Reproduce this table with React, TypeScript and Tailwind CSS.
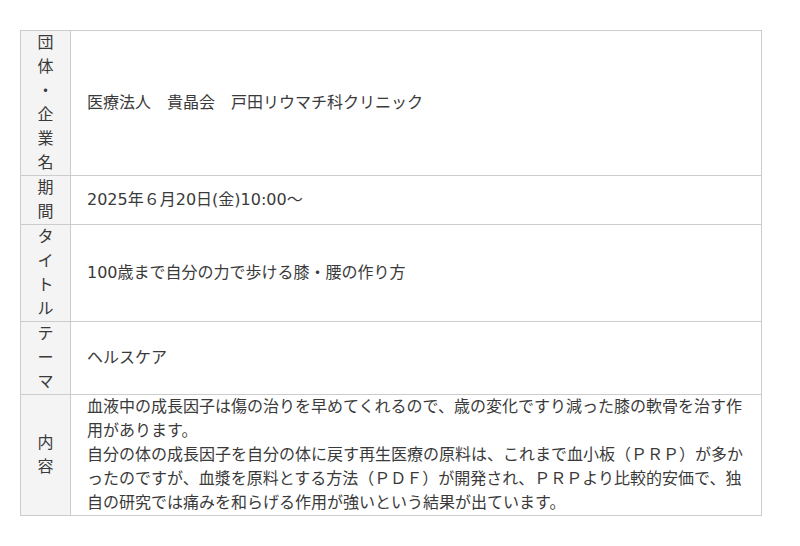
import React from "react";

const rows: { head: string; body: React.ReactNode }[] = [
  { head: "団体・企業名", body: "医療法人　貴晶会　戸田リウマチ科クリニック" },
  { head: "期間", body: "2025年６月20日(金)10:00～" },
  { head: "タイトル", body: "100歳まで自分の力で歩ける膝・腰の作り方" },
  { head: "テーマ", body: "ヘルスケア" },
  {
    head: "内容",
    body: (
      <>
        血液中の成長因子は傷の治りを早めてくれるので、歳の変化ですり減った膝の軟骨を治す作用があります。
        <br />
        自分の体の成長因子を自分の体に戻す再生医療の原料は、これまで血小板（ＰＲＰ）が多かったのですが、血漿を原料とする方法（ＰＤＦ）が開発され、ＰＲＰより比較的安価で、独自の研究では痛みを和らげる作用が強いという結果が出ています。
      </>
    ),
  },
];

export default function App() {
  return (
    <div
      className="w-[800px] h-[546px] bg-white pl-[20px] pt-[30px] text-[#3a3a3a] text-[16px] leading-[24px]"
      style={{ fontFamily: '"DejaVu Sans", "Noto Sans CJK JP", sans-serif' }}
    >
      <table className="w-[742px] border-collapse table-fixed">
        <colgroup>
          <col className="w-[50px]" />
          <col />
        </colgroup>
        <tbody>
          {rows.map((r) => (
            <tr key={r.head}>
              <th className="border border-[#cccccc] bg-[#f4f4f4] font-normal text-center align-middle p-0">
                <div className="flex flex-col items-center">
                  {Array.from(r.head).map((c, i) => (
                    <span key={i}>{c}</span>
                  ))}
                </div>
              </th>
              <td className="border border-[#cccccc] align-middle py-0 pl-[16px] pr-[16px]">
                {r.body}
              </td>
            </tr>
          ))}
        </tbody>
      </table>
    </div>
  );
}
